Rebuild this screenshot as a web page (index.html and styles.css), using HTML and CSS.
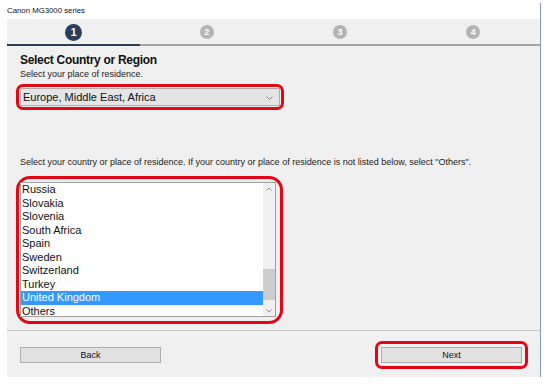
FILE: index.html
```html
<!DOCTYPE html>
<html>
<head>
<meta charset="utf-8">
<link rel="stylesheet" href="styles.css">
</head>
<body>
<div class="wrap">
  <div class="title">Canon MG3000 series</div>
  <div class="panel">
    <div class="tabs">
      <div class="tab active"><span class="num">1</span></div>
      <div class="tab"><span class="num">2</span></div>
      <div class="tab"><span class="num">3</span></div>
      <div class="tab"><span class="num">4</span></div>
    </div>
    <div class="content">
      <h1 class="heading">Select Country or Region</h1>
      <p class="sub">Select your place of residence.</p>
      <div class="ring ring-select">
        <div class="select">
          <span>Europe, Middle East, Africa</span>
          <svg class="chev" width="7" height="4" viewBox="0 0 7 4"><polyline points="0.5,0.5 3.5,3.5 6.5,0.5" fill="none" stroke="#888" stroke-width="1"/></svg>
        </div>
      </div>
      <p class="instr">Select your country or place of residence. If your country or place of residence is not listed below, select "Others".</p>
      <div class="ring ring-list">
        <div class="listbox">
          <div class="items">
            <div class="item">Russia</div>
            <div class="item">Slovakia</div>
            <div class="item">Slovenia</div>
            <div class="item">South Africa</div>
            <div class="item">Spain</div>
            <div class="item">Sweden</div>
            <div class="item">Switzerland</div>
            <div class="item">Turkey</div>
            <div class="item selected">United Kingdom</div>
            <div class="item">Others</div>
          </div>
          <div class="scrollbar">
            <svg class="arrow" width="6" height="4" viewBox="0 0 6 4"><polyline points="0.5,3.5 3,1 5.5,3.5" fill="none" stroke="#8a8a8a" stroke-width="1"/></svg>
            <div class="track"><div class="thumb"></div></div>
            <svg class="arrow" width="6" height="4" viewBox="0 0 6 4"><polyline points="0.5,0.5 3,3 5.5,0.5" fill="none" stroke="#8a8a8a" stroke-width="1"/></svg>
          </div>
        </div>
      </div>
    </div>
    <div class="footer">
      <div class="btn">Back</div>
      <div class="ring ring-btn"><div class="btn">Next</div></div>
    </div>
  </div>
</div>
</body>
</html>
```

FILE: styles.css
```css
* { box-sizing: border-box; }
html, body { margin: 0; padding: 0; background: #ffffff; }
body { font-family: "Liberation Sans", Arial, sans-serif; color: #000; }

.wrap {
  margin: 3px 0 0 7px;
  width: 534px;
  border-right: 1px solid #7f9dbd;
}
.title {
  height: 16px;
  line-height: 16px;
  font-size: 7.8px;
  color: #111;
  background: #fff;
}
.panel { background: #f0f0f0; width: 533px; }

.tabs { display: flex; }
.tab {
  flex: 1;
  height: 27px;
  display: flex;
  align-items: center;
  justify-content: center;
  border-bottom: 2px solid #a6a6a6;
  padding-top: 1px;
}
.tab.active { border-bottom-color: #2d3e5a; }
.num {
  width: 14px; height: 14px;
  border-radius: 50%;
  background: #b4b4b4;
  color: #fff;
  font-weight: bold;
  font-size: 9px;
  line-height: 14px;
  text-align: center;
}
.tab.active .num {
  width: 17px; height: 17px; line-height: 17px;
  background: #2d3e5a;
  font-size: 10.5px;
}

.content { padding: 0 13px; }
.heading {
  margin: 6px 0 0 0;
  font-size: 12px;
  letter-spacing: -0.3px;
  line-height: 16px;
  font-weight: bold;
  color: #111;
}
.sub {
  margin: 0;
  font-size: 9px;
  line-height: 12px;
  color: #222;
}

.ring {
  border: 3px solid #e30613;
  border-radius: 7px;
}
.ring-select {
  margin: 4px 0 0 -4px;
  width: 268px;
  padding: 1px;
}
.select {
  height: 18px;
  background: #e5e5e5;
  border: 1px solid #adadad;
  display: flex;
  align-items: center;
  justify-content: space-between;
  padding: 0 6px 0 2px;
  font-size: 11px;
  color: #111;
}
.chev { margin-top: 1px; }

.instr {
  margin: 46px 0 0 0;
  font-size: 9px;
  line-height: 12px;
  color: #222;
  white-space: nowrap;
}

.ring-list {
  margin: 8px 0 0 -4px;
  width: 267px;
  border-radius: 14px;
  padding: 3px 4px 4px 1px;
}
.listbox {
  height: 135px;
  width: 256px;
  background: #fff;
  border: 1px solid #a0a0a0;
  display: flex;
  overflow: hidden;
}
.items { flex: 1; }
.item {
  height: 13.5px;
  line-height: 13.5px;
  font-size: 11px;
  padding-left: 1px;
  color: #111;
  white-space: nowrap;
}
.item.selected { background: #3399ff; color: #fff; }
.scrollbar {
  width: 12px;
  background: #f0f0f0;
  display: flex;
  flex-direction: column;
  align-items: center;
  padding: 4px 0 3px;
}
.arrow { flex: none; }
.track { flex: 1; width: 100%; padding-top: 78px; padding-bottom: 8px; }
.thumb { height: 31px; background: #cdcdcd; width: 100%; }

.footer {
  margin-top: 6px;
  border-top: 1px solid #c9c9c9;
  display: flex;
  align-items: center;
  justify-content: space-between;
  padding: 10px 12px 8px 13px;
}
.btn {
  width: 141px;
  height: 16px;
  background: #e1e1e1;
  border: 1px solid #adadad;
  font-size: 9px;
  line-height: 14px;
  text-align: center;
  color: #111;
}
.ring-btn { padding: 3px; }
```
